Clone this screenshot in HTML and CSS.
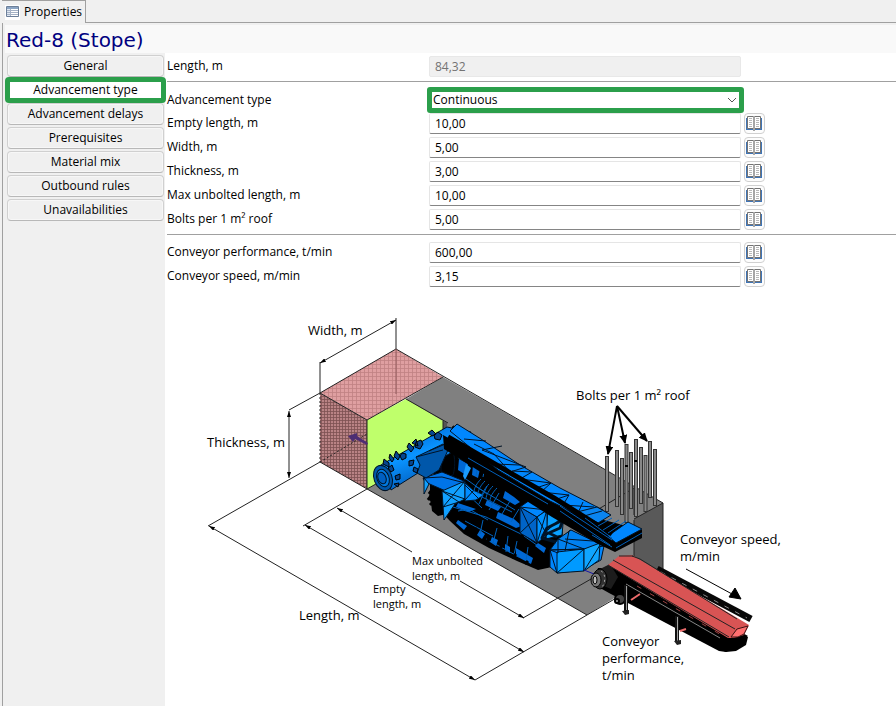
FILE: index.html
```html
<!DOCTYPE html>
<html lang="en">
<head>
<meta charset="utf-8">
<title>Properties</title>
<link rel="stylesheet" href="styles.css">
</head>
<body>
<svg class="defs" aria-hidden="true">
  <symbol id="book" viewBox="0 0 16 16">
    <path fill="#3f74b5" d="M0 3h2v10h12V3h2v12H0z"/>
    <path fill="#fff" stroke="#737373" d="M1.500 1.500h13v12h-13z"/>
    <path fill="#a6a6a6" d="M7 1h2v15H7z"/>
    <path fill="none" stroke="#b8b8b8" d="M3 3.500h3M3 5.500h3M3 7.500h3M3 9.500h3M3 11.500h3M10 3.500h3M10 5.500h3M10 7.500h3M10 9.500h3M10 11.500h3"/>
  </symbol>
</svg>
<div class="window">
  <div class="tabs">
    <button class="tab" type="button">
      <svg class="tab-icon" viewBox="0 0 15 15" aria-hidden="true">
        <path fill="#fff" d="M0 0h15v15H0z"/>
        <path fill="#fff" stroke="#6c7f99" d="M1.500 1.500h12v10h-12z"/>
        <path fill="#8ba5c4" d="M2 2h11v2H2z"/>
        <path fill="#dfe7f2" d="M2 4h3v7H2z"/>
        <path stroke="#a5b2c6" d="M2 5.500h11M2 7.500h11M2 9.500h11M5.500 4v7"/>
      </svg>
      Properties
    </button>
  </div>
  <div class="panel">
    <h1 class="title">Red-8 (Stope)</h1>
    <div class="body">
      <nav class="side">
        <button class="side-btn" type="button">General</button>
        <button class="side-btn current" type="button">Advancement type</button>
        <button class="side-btn" type="button">Advancement delays</button>
        <button class="side-btn" type="button">Prerequisites</button>
        <button class="side-btn" type="button">Material mix</button>
        <button class="side-btn" type="button">Outbound rules</button>
        <button class="side-btn" type="button">Unavailabilities</button>
      </nav>
      <main class="main">
        <form class="form">
          <div class="group">
            <div class="row"><label for="length">Length, m</label><input id="length" type="text" value="84,32" disabled></div>
          </div>
          <div class="group">
            <div class="row"><label for="type">Advancement type</label>
              <div class="select">
                <select id="type"><option>Continuous</option></select>
                <svg class="chevron" viewBox="0 0 10 6" aria-hidden="true"><path fill="none" stroke="#555" d="M1 1l4 4 4-4"/></svg>
              </div>
            </div>
            <div class="row"><label for="empty">Empty length, m</label><input id="empty" type="text" value="10,00"><button class="book" type="button" aria-label="Empty length library"><svg><use href="#book"/></svg></button></div>
            <div class="row"><label for="width">Width, m</label><input id="width" type="text" value="5,00"><button class="book" type="button" aria-label="Width library"><svg><use href="#book"/></svg></button></div>
            <div class="row"><label for="thick">Thickness, m</label><input id="thick" type="text" value="3,00"><button class="book" type="button" aria-label="Thickness library"><svg><use href="#book"/></svg></button></div>
            <div class="row"><label for="unbolted">Max unbolted length, m</label><input id="unbolted" type="text" value="10,00"><button class="book" type="button" aria-label="Max unbolted length library"><svg><use href="#book"/></svg></button></div>
            <div class="row"><label for="bolts">Bolts per 1 m² roof</label><input id="bolts" type="text" value="5,00"><button class="book" type="button" aria-label="Bolts library"><svg><use href="#book"/></svg></button></div>
          </div>
          <div class="group">
            <div class="row"><label for="perf">Conveyor performance, t/min</label><input id="perf" type="text" value="600,00"><button class="book" type="button" aria-label="Conveyor performance library"><svg><use href="#book"/></svg></button></div>
            <div class="row"><label for="speed">Conveyor speed, m/min</label><input id="speed" type="text" value="3,15"><button class="book" type="button" aria-label="Conveyor speed library"><svg><use href="#book"/></svg></button></div>
          </div>
        </form>
        <svg class="diagram" viewBox="165 288 731 418" role="img" aria-label="Continuous miner in a stope">
          <defs>
            <pattern id="mesh" width="4" height="4" patternUnits="userSpaceOnUse"><path fill="#df9fa1" d="M0 0h4v4H0z"/><path fill="none" stroke="#c08183" stroke-width=".8" d="M0 .5h4M.5 0v4"/></pattern>
            <pattern id="mesh-dark" width="3" height="3" patternUnits="userSpaceOnUse"><path fill="#b98385" d="M0 0h3v3H0z"/><path fill="none" stroke="#7c5052" stroke-width=".8" d="M0 .5h3M.5 0v3"/></pattern>
            <linearGradient id="drum" x1="0" y1="0" x2=".5" y2="1"><stop offset=".15" stop-color="#0068d5"/><stop offset=".5" stop-color="#0a94ff"/><stop offset="1" stop-color="#0055b5"/></linearGradient>
            <marker id="tip" markerWidth="6" markerHeight="4" refX="6" refY="2" orient="auto-start-reverse" markerUnits="userSpaceOnUse"><path d="M0 0l6 2-6 2z"/></marker>
            <marker id="head" markerWidth="9" markerHeight="8" refX="8" refY="4" orient="auto-start-reverse" markerUnits="userSpaceOnUse"><path d="M0 0l9 4-9 4z"/></marker>
          </defs>

          <!-- stope body -->
          <path fill="#808080" d="M443 377l220 126v65l-76 47-220-126 39-90z"/>
          <path fill="#595959" d="M634 519l29-16v65l-29 8z"/>
          <path fill="#bfff6b" d="M367 420l39-21 37 22v25l-76 43z"/>
          <path fill="#555" d="M443 421l4 2v9l-4 3z"/>
          <path fill="url(#mesh)" d="M320 393l76-44 47 28-76 43z"/>
          <path fill="url(#mesh-dark)" d="M320 393l47 27v69l-47-27z"/>
          <g class="line">
            <path d="M320 393l76-44 267 154v66M320 393l47 27 76-43M367 420v69M320 462l267 153 50-29M367 489l16-9M406 399l42 24M443 421v12M634 519l29-16M634 520v36M597 510l37-22M634 489v26"/>
            <path stroke="#925b5d" d="M396 349v45"/>
            <path stroke-dasharray="2 2" d="M320 462l47-28M320 393v69"/>
          </g>
          <path fill="#4d2e73" d="M348 436l9-3v3l11 7-1 2-12-6-2 3z"/>

          <!-- dimension lines -->
          <g class="line">
            <path d="M320 393v-31M396 349v-31M320 393l-31 17M320 462l-112 64M367 489l-64 37M475 680l112-65M523 618l75-43"/>
            <g marker-start="url(#tip)" marker-end="url(#tip)">
              <path d="M320 363l76-43"/><path d="M289 411v67"/><path d="M209 526l266 154"/><path d="M305 525l219 127"/>
            </g>
            <path marker-start="url(#tip)" d="M337 508l75 44"/>
            <path marker-end="url(#tip)" d="M460 581l64 37"/>
          </g>

          <!-- roof bolts -->
          <g class="bolt-edge"><path d="M607 456v56M617 450v57M622 458v57M626.500 444v79M631 452v57M636 439v78M641 447v57M645.500 455v57M650 441v57M655 449v57"/></g>
          <g class="bolt"><path d="M607 457v54M617 451v55M622 459v55M626.500 445v77M631 453v55M636 440v76M641 448v55M645.500 456v55M650 442v55M655 450v55"/></g>
          <path d="M625 465h3v2h-3zM634 460h3v2h-3z"/>

          <!-- crawler tracks and chassis -->
          <path d="M430 481l13 7 4 26-9 2-6-5-1-8-2-5 1-8z"/>
          <path d="M437 462l20-16 68 42 30 20 8 22-2 26-9 11-14 3-21-9-28-13-25-14-14-13-13-14-6-22z"/>
          <g fill="#0068d5">
            <path d="M459 459l9 5-2 11-8-5zM473 465l7 4-2 9-6-3zM505 491l9 6 6 5-5 3-12-7zM487 500l14 7-3 4-13-6zM498 512l16 7 8 7-6 2-20-10zM458 503l18 6-7 3-13-5z"/>
            <path d="M458 520l9 6-3 4-8-7zM480 530l5 4-3 5-5-4zM492 537l6 3-2 6-6-4zM505 544l5 3v6l-5-3zM516 548l17 10-2 6-15-8zM538 543l8 5-2 5-9-7z"/>
          </g>
          <path fill="#1a9cff" d="M457 449l15 7-2 8-12-6zM466 464l5 4-6 12-2-4z"/>
          <path class="wire-blue" d="M453 507l33 10 35 17M465 521l28 15M458 511l11-2 19 11M483 520l-3 14M497 528l-4 15M508 536l-2 16M517 541l-3 14M528 547l-2 14M478 495l34 17M463 490l19 18M487 486l-8 18M499 493l-10 17M510 501l-8 13M519 509l-8 13M475 486l40 24M524 536l17 12M486 539l33 18M466 479l21 15M470 453l45 28M476 463l14 9M478 462l-2 14M485 467l-2 10"/>
          <g class="shape">
            <path fill="#000" d="M441 466c-3-15 10-25 13-11 2 12-1 20-1 20l-12 4z"/>
            <path fill="#0074e8" d="M423 478l19-6 22 9 5 6-21 5-23-10z"/>
            <path fill="#11a0ff" d="M442 491l23-10v18l-10 5-11 16zM424 478v16l5-10z"/>
            <path d="M442 491l23 8M442 491l17 11-16 5M465 481l-22 26M423 478l19-1 23 6"/>
            <path fill="#008cff" d="M465 483l8 7 11 5-8 5-11 1z"/><path d="M465 485l14 14M465 500l9-10"/>
          </g>
          <path class="wire-blue" d="M481 479c-4 4-7 9-7 13M485 481c-4 4-7 9-7 13M489 484c-4 4-7 9-7 13M493 486c-4 4-7 9-7 13M497 488c-4 4-7 9-7 13"/>
          <path class="rollers" d="M432 490l-3 4M431 496l-3 4M433 502l-3 3M436 508l-3 3M477 529l-6 1M490 539l-5 3M502 546l-4 4M516 554l-4 4M528 561l-3 3M545 563l3 4"/>

          <!-- electrical box and rear hopper -->
          <g class="shape">
            <path fill="#0aa0ff" d="M548 505l16 8-2 22-16 4z"/><path d="M548 530l15-14"/>
            <path fill="#0064c8" d="M520 507l17 10v26l-17-10z"/><path fill="#0087ff" d="M520 507l10-7 17 10-10 7z"/><path fill="#0091ff" d="M537 517l10-7v25l-10 8z"/>
            <path d="M520 507l17 36M537 517l-17 16M537 517l10 18M537 543l10-33M520 507l27 3"/>
            <path fill="#0087ff" d="M550 550l20-20 34 16-3 14-18 10-26 3-7-6z"/>
            <path fill="#0080f0" d="M550 550l8-11 13-9 33 16-20 3z"/>
            <path fill="#009aff" d="M557 552l27-3v22l-27 2z"/><path fill="#10a5ff" d="M584 549l16-6-1 17-15 11z"/>
            <path d="M558 539l26 10M569 531l-4 20M550 550l7 23M557 573l27-24M584 571l16-26M550 550l34-1M565 539l28 2M558 539v14l-8-3"/>
            <path fill="none" stroke-width="3" d="M542 536l18-8 3-8-16 8-5 10 14 4M549 533l8 4"/>
          </g>

          <!-- cutting drum -->
          <g class="shape">
            <path fill="url(#drum)" d="M381 465l66-38 24 5-9 15-26 14-18 12-27 17z"/>
            <path fill="#0057aa" d="M416 457l27-13 5 6-9 20-13 8-9-5 3-8z"/>
            <path d="M416 457l27-7M443 445l-14 6"/>
            <ellipse cx="383" cy="478" rx="9" ry="13" transform="rotate(-20 383 478)" fill="#0057aa"/>
            <ellipse cx="383" cy="478" rx="6" ry="9" transform="rotate(-20 383 478)" fill="#0078df"/>
            <ellipse cx="382" cy="478" rx="4" ry="6" transform="rotate(-20 382 478)" fill="#005fc0"/>
          </g>
          <g class="picks">
            <path d="M383 464l1-5 5 4v4zM389 458l1-4 4 5-2 3zM394 456l2-5 4 5-2 4zM407 447l2-4 5 5-3 4zM412 443l4-4 2 7zM416 442l5-2 2 4-3 5-5-2zM428 433l4-3 4 4-4 2zM434 435l4-3 4 3-2 5-5-1zM402 453l4 1v4l-4 2-2-4zM388 468l4-3 2 5-3 2zM409 461l5-1-1 5-4 1zM395 476l5-2v5l-4 1zM414 467l4 2-1 4-4-2zM394 484l5-1-1 4zM453 426l4 1-1 4-4-1z"/>
          </g>

          <!-- discharge beam -->
          <path d="M443 435l112 62 45 22 42 11v8l-27 14-17-8-46-27-108-68z"/>
          <g class="shape">
            <path fill="#0087ff" d="M450 431l7-7 24 15 39 26 40 23 43 22-12 11-41-20-52-31z"/>
            <path d="M464 439l22 2M474 444l20 10M482 450l20-4M482 450l44 17-16 5-16-18M494 464l26 1M520 479l12-7-20-1M520 479l31 4-15 5M551 483l-10 9 28 3-12 4M569 495l-6 10 31 2M583 502l-5 11"/>
            <path fill="#0a84ef" d="M577 512l20-5 14 8-13 8z"/><path d="M584 516l18-5"/>
            <path fill="#0087ff" d="M608 536l20-14 14 7-26 14z"/>
          </g>
          <path class="rail" d="M448 437l106 61 58 36"/>
          <path class="beam-lines" d="M468 458l80 46M560 506l52 34M560 511l50 34M585 518l27 20M598 526l14-8M603 530l16-10M608 533l18-12M616 548l26-15M612 547l-20-12"/>

          <!-- conveyor -->
          <path fill="none" stroke="#1414a8" d="M584 570l10 4"/>
          <path d="M598 568l29 0 121 68-12 10-10 6-7-1-110-58-16-9z"/>
          <path d="M715 636l33 1-2 8-10 6-10 1-11-5z"/>
          <path class="rack" d="M657 569l94 50"/>
          <path class="rack-gaps" d="M661 572l86 46"/>
          <path fill="#1c1c1c" d="M598 570l12-6 8 13-7 12-12-5z"/>
          <g fill="#333" stroke="#000"><ellipse cx="600" cy="579" rx="7" ry="10"/><ellipse cx="596" cy="580" rx="5" ry="7" fill="#777"/><ellipse cx="595" cy="580" rx="2" ry="4" fill="#bbb"/></g>
          <path fill="none" stroke="#aaa" stroke-dasharray="2 3" d="M601 571c5 2 5 13 0 17"/>
          <g fill="#444" stroke="#000" stroke-width="2"><circle cx="620" cy="599" r="5"/><circle cx="617" cy="601" r="2" fill="#aaa"/></g>
          <path fill="#d85454" d="M608 565l11-9 13-1 117 70-5 10-10 3h-6z"/>
          <path fill="#ff6f6f" stroke="#3a1212" d="M731 637l6-8 11-3-4 8-6 3z"/>
          <path class="line" d="M613 560l122 69M632 556l8 3 97 60M608 565l121 72M619 556l14 0"/>
          <path fill="none" stroke="#ed6b6b" stroke-width="2" d="M631 600l9-6M686 629l-6 2"/>
          <path fill="none" stroke="#9b4141" stroke-dasharray="5 10" d="M637 586l86 50"/>
          <path fill="none" stroke="#858585" d="M626 584l94 54"/>
          <path fill="none" stroke="#111" stroke-width="4" d="M626 585v27M677 616v26"/>
          <path fill="none" stroke="#a0a0a0" d="M626.500 586v24M677.500 617v25"/>
          <path fill="#222" d="M622 611l7-1v4l-4 1zM674 641l7-1v4l-4 1z"/>

          <!-- pointers -->
          <g class="pointer" marker-end="url(#head)"><path d="M617 406l-9 48"/><path d="M617 406l8 37"/><path d="M617 406l30 35"/></g>
          <path d="M686 569l46 25" fill="none" stroke="#000"/><path d="M735 588l-6 9 12 2z" stroke="#000"/>

          <!-- captions -->
          <g class="caption">
            <text x="308" y="335">Width, m</text><text x="207" y="447">Thickness, m</text><text x="576" y="400">Bolts per 1 m² roof</text>
            <text x="680" y="544">Conveyor speed,<tspan x="680" dy="17">m/min</tspan></text>
            <text x="602" y="646">Conveyor<tspan x="602" dy="17">performance,</tspan><tspan x="602" dy="17">t/min</tspan></text>
            <text x="299" y="620">Length, m</text>
          </g>
          <g class="caption small">
            <text x="412" y="565">Max unbolted<tspan x="412" dy="15">length, m</tspan></text>
            <text x="373" y="593">Empty<tspan x="373" dy="15">length, m</tspan></text>
          </g>
        </svg>
      </main>
    </div>
  </div>
</div>
</body>
</html>
```
FILE: styles.css
```css
* { box-sizing: border-box; }
html, body { height: 100%; }
body { margin: 0; background: #f0f0f0; color: #000; font: 12px/16px "Open Sans", "Noto Sans", sans-serif; }
button, input, select { font: inherit; color: inherit; margin: 0; }
.defs { position: absolute; width: 0; height: 0; }
.window { min-height: 100%; display: flex; flex-direction: column; padding-left: 2px; }
.tabs { display: flex; height: 23px; border-bottom: 1px solid #a0a0a0; }
.tab { display: flex; align-items: center; gap: 4px; height: 23px; padding: 0 3px; background: #f0f0f0; border: 1px solid #a0a0a0; border-left-width: 0; border-bottom: 0; }
.tab-icon { width: 15px; height: 15px; }
.panel { flex: 1; display: flex; flex-direction: column; border-left: 1px solid #a0a0a0; padding: 2px 0 0 2px; }
.title { margin: 0; height: 28px; padding-left: 1px; background: #f9f9f9; color: #000080; font: 20px/30px "DejaVu Sans", Verdana, sans-serif; }
.body { flex: 1; display: flex; background: #fff; }
.side { flex: 0 0 160px; background: #f0f0f0; padding: 2px 1px 0 2px; display: flex; flex-direction: column; gap: 2px; }
.side-btn { height: 22px; padding: 0; border: 1px solid #d0d0d0; border-bottom-color: #b8b8b8; border-radius: 4px; background: #f0f0f0; box-shadow: inset 0 0 0 1px #f7f7f7; text-align: center; }
.side-btn.current { background: #fff; border: 0; border-radius: 2px; outline: 5px solid #2b9f4b; outline-offset: -3px; z-index: 1; }
.main { flex: 1; min-width: 0; }
.group { margin-left: 2px; padding: 5px 0 3px; border-bottom: 1px solid #a0a0a0; }
.group:first-child { padding-top: 1px; }
.group:last-child { border-bottom: 0; padding-bottom: 0; }
.row { display: grid; grid-template-columns: 262px minmax(120px, 312px) 24px; align-items: center; height: 24px; }
.row input { height: 21px; width: 100%; padding: 0 5px; border: 1px solid #e5e5e5; border-bottom-color: #858585; border-radius: 2px; background: #fff; }
.row input:disabled { background: #f0f0f0; border-color: #e8e8e8; color: #737373; }
.book { width: 21px; height: 21px; margin-left: 3px; padding: 0; border: 1px solid #d0d0d0; border-radius: 4px; background: #fdfdfd; display: flex; align-items: center; justify-content: flex-start; padding-left: 1px; }
.book svg { width: 16px; height: 16px; flex: none; }
.select { position: relative; margin: 0 -3px 0 -2px; border: 5px solid #2b9f4b; border-radius: 3px; height: 26px; }
.select select { display: block; width: 100%; height: 16px; padding: 0 1px; border: 0; background: #fff; appearance: none; }
.chevron { position: absolute; right: 2px; top: 5px; width: 10px; height: 6px; pointer-events: none; }
.diagram { display: block; width: 100%; }
.line { fill: none; stroke: #222; stroke-width: 1; }
.shape { stroke: #001326; stroke-width: 1; stroke-linejoin: round; }
.shape path:not([fill]) { fill: none; }
.bolt-edge { fill: none; stroke: #333; stroke-width: 4; }
.bolt { fill: none; stroke: #888; stroke-width: 2; }
.wire-blue { fill: none; stroke: #0063bd; stroke-width: 1; }
.rollers { fill: none; stroke: #000; stroke-width: 3; }
.picks { fill: #06468f; stroke: #000; stroke-width: 1; }
.rail { fill: none; stroke: #000; stroke-width: 5; }
.beam-lines { fill: none; stroke: #0060bb; stroke-width: 1; }
.rack { fill: none; stroke: #080808; stroke-width: 7; }
.rack-gaps { fill: none; stroke: #8a8a8a; stroke-width: 1; stroke-dasharray: 5 7; }
.pointer { fill: none; stroke: #000; stroke-width: 2; }
.caption { font-size: 13px; fill: #000; }
.small { font-size: 11px; }
```
